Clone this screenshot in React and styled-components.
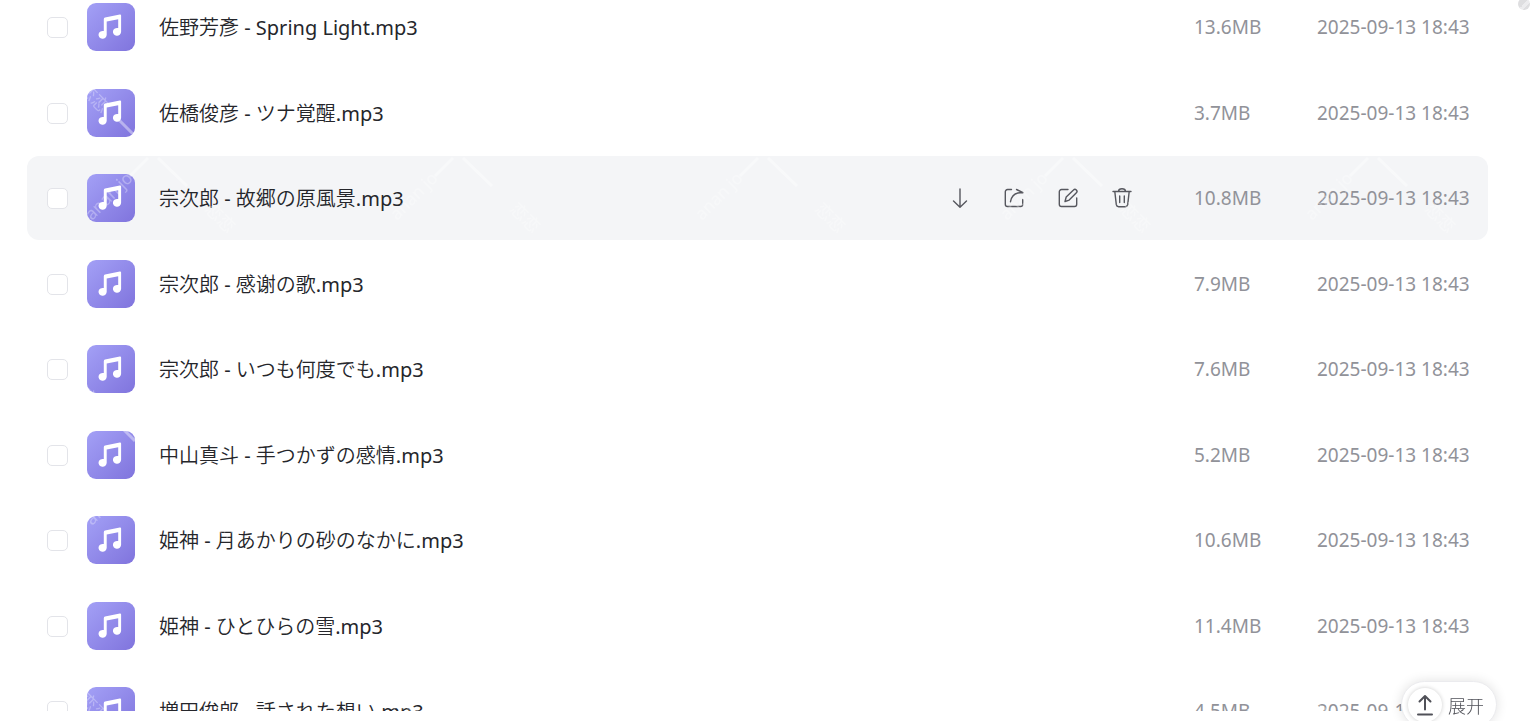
import React from 'react';
import styled, {createGlobalStyle} from 'styled-components';

const GlobalStyle = createGlobalStyle`
  * {
    box-sizing: border-box;
  }
  body {
    margin: 0;
    background: #fff;
    font-family: 'Noto Sans', 'Noto Sans CJK SC', sans-serif;
    overflow: hidden;
  }
`;
const Page = styled.main`
  position: relative;
  display: flex;
  flex-direction: column;
  height: 100vh;
  padding: 0 45px 10px 27px;
`;
const List = styled.ul`
  flex: 1;
  min-height: 0;
  margin: 0;
  padding: 0;
  list-style: none;
  overflow: hidden;
`;
const Row = styled.li`
  display: flex;
  align-items: center;
  height: 84px;
  margin-bottom: 1px;
  padding: 0 19px 0 20px;
  border-radius: 12px;
  background: ${(props) => (props.$active ? '#f4f5f7' : 'transparent')};
  &:nth-child(odd) {
    margin-bottom: 2px;
  }
  &:first-child {
    margin-top: -15px;
  }
`;
const Checkbox = styled.input`
  appearance: none;
  flex: none;
  width: 21px;
  height: 21px;
  margin: 0 19px 0 0;
  border: 1px solid #e3e4e9;
  border-radius: 5px;
  background: #fff;
  &:checked {
    background: #8b83e8;
  }
`;
const Name = styled.label`
  flex: 1;
  min-width: 0;
  margin-left: 24px;
  padding-top: 2px;
  overflow: hidden;
  color: #25262b;
  font-family: 'Noto Sans', 'Noto Sans CJK JP DemiLight', 'Noto Sans CJK JP Light',
    'Noto Sans CJK JP', sans-serif;
  font-size: 20px;
  line-height: 28px;
  white-space: nowrap;
  text-overflow: ellipsis;
`;
const Actions = styled.div`
  display: flex;
  gap: 30px;
  margin-right: 60px;
`;
const IconButton = styled.button`
  all: unset;
  display: flex;
  width: 24px;
  height: 24px;
  color: #56575e;
  cursor: pointer;
`;
const Meta = styled.span`
  flex: none;
  width: ${(props) => props.$width};
  color: #919299;
  font-size: 19px;
  line-height: 28px;
  white-space: nowrap;
`;
const ScrollThumb = styled.div`
  position: absolute;
  top: -2px;
  right: 3px;
  width: 12px;
  height: 12px;
  border-radius: 50%;
  background: linear-gradient(135deg, #dedee0 50%, #ececee 50%, #ececee 70%, #dedee0 70%);
`;
const Watermark = styled.svg`
  position: absolute;
  inset: 0;
  width: 100%;
  height: 100%;
  pointer-events: none;
`;
const Expand = styled.button`
  position: fixed;
  right: 36px;
  bottom: -7px;
  display: flex;
  align-items: center;
  gap: 6px;
  width: 96px;
  height: 47px;
  padding: 0 6px;
  border: 1px solid #ebebee;
  border-radius: 24px;
  background: #fff;
  box-shadow: 0 0 12px rgba(0, 0, 0, 0.12);
  color: #505158;
  font-family: inherit;
  font-size: 18px;
  font-weight: 300;
  white-space: nowrap;
  cursor: pointer;
`;
const Circle = styled.span`
  display: flex;
  align-items: center;
  justify-content: center;
  flex: none;
  width: 34px;
  height: 34px;
  border-radius: 50%;
  box-shadow: 0 0 4px rgba(0, 0, 0, 0.2);
`;

const MusicIcon = () => (
  <svg width="48" height="48" viewBox="0 0 48 48" aria-hidden="true">
    <defs>
      <linearGradient id="music" x1="0" y1="0" x2="1" y2="1">
        <stop offset="0" stopColor="#a3a0f6" />
        <stop offset="1" stopColor="#8074dd" />
      </linearGradient>
    </defs>
    <rect width="48" height="48" rx="9" fill="url(#music)" />
    <path
      fill="#fff"
      d="M16.800 16.200q0-1.300 1.200-1.600l14.800-3.100q1.300-.2 1.300 1v16.300a4.100 3.900 0 1 1-2.900-3.700V16.200l-11.500 2.400v13.200a4.100 3.900 0 1 1-2.900-3.700z"
    />
  </svg>
);

const line = {
  width: 24,
  height: 24,
  viewBox: '0 0 24 24',
  fill: 'none',
  stroke: 'currentColor',
  strokeWidth: 1.4,
  strokeLinecap: 'round',
  strokeLinejoin: 'round',
};
const DownloadIcon = () => (
  <svg {...line}>
    <path d="M12 3v18M5.500 15l6.500 6.200 6.500-6.200" />
  </svg>
);
const ShareIcon = () => (
  <svg {...line}>
    <path d="M9.500 3.500H5.500a2.200 2.200 0 0 0-2.200 2.200v12.600a2.200 2.200 0 0 0 2.200 2.200h13a2.200 2.200 0 0 0 2.200-2.200v-4.800M14.500 3.500l6.500 3.200H18c-4.800.3-8.500 3-9.500 9" />
  </svg>
);
const EditIcon = () => (
  <svg {...line}>
    <path d="M12 3.500H5.500a2.200 2.200 0 0 0-2.200 2.200v12.600a2.200 2.200 0 0 0 2.200 2.200h13a2.200 2.200 0 0 0 2.200-2.200V12M9 15.500l1.200-4.500 7.300-7a2 2 0 0 1 2.900 2.800l-7.200 7.300z" />
  </svg>
);
const TrashIcon = () => (
  <svg {...line}>
    <path d="M3 5.500h18M8.500 5.200c.2-3.200 6.800-3.200 7 0M4.800 5.500l1.500 13.200a2.400 2.400 0 0 0 2.400 2h6.600a2.400 2.400 0 0 0 2.400-2l1.500-13.200M9.700 10v6.500M14.300 10v6.500" />
  </svg>
);

const actions = [
  {label: '下载', Icon: DownloadIcon},
  {label: '分享', Icon: ShareIcon},
  {label: '重命名', Icon: EditIcon},
  {label: '删除', Icon: TrashIcon},
];

const files = [
  {name: '佐野芳彥 - Spring Light.mp3', size: '13.6MB'},
  {name: '佐橋俊彦 - ツナ覚醒.mp3', size: '3.7MB'},
  {name: '宗次郎 - 故郷の原風景.mp3', size: '10.8MB', active: true},
  {name: '宗次郎 - 感谢の歌.mp3', size: '7.9MB'},
  {name: '宗次郎 - いつも何度でも.mp3', size: '7.6MB'},
  {name: '中山真斗 - 手つかずの感情.mp3', size: '5.2MB'},
  {name: '姫神 - 月あかりの砂のなかに.mp3', size: '10.6MB'},
  {name: '姫神 - ひとひらの雪.mp3', size: '11.4MB'},
  {name: '増田俊郎 - 話された想い.mp3', size: '4.5MB'},
];

const FileRow = ({file, id}) => (
  <Row $active={file.active}>
    <Checkbox type="checkbox" id={id} />
    <MusicIcon />
    <Name htmlFor={id} lang="ja">
      {file.name}
    </Name>
    {file.active && (
      <Actions>
        {actions.map(({label, Icon}) => (
          <IconButton key={label} aria-label={label}>
            <Icon />
          </IconButton>
        ))}
      </Actions>
    )}
    <Meta $width="123px">{file.size}</Meta>
    <Meta $width="152px">2025-09-13 18:43</Meta>
  </Row>
);

const App = () => (
  <Page>
    <GlobalStyle />
    <List>
      {files.map((file, index) => (
        <FileRow key={file.name} file={file} id={`file-${index}`} />
      ))}
    </List>
    <ScrollThumb />
    <Watermark aria-hidden="true">
      <defs>
        <pattern id="mark" width="305" height="305" patternUnits="userSpaceOnUse">
          <path
            d="M118 119l17 17M158 158l29 28M148 158l-18 18"
            stroke="#fff"
            strokeWidth="3"
            opacity="0.4"
          />
          <g fill="#fff" fontSize="17" opacity="0.3">
            <text transform="translate(78 90) rotate(45)">恋恋</text>
            <text transform="translate(204 210) rotate(45)">恋恋</text>
            <text transform="translate(92 221) rotate(-45)">anan jo</text>
          </g>
        </pattern>
      </defs>
      <rect width="100%" height="100%" fill="url(#mark)" />
    </Watermark>
    <Expand>
      <Circle>
        <svg
          width="22"
          height="22"
          viewBox="0 0 22 22"
          fill="none"
          stroke="currentColor"
          strokeWidth="2"
          strokeLinecap="round"
          strokeLinejoin="round"
        >
          <path d="M11 15.500V2.500M5.500 7.500L11 2l5.500 5.500M4 20.500h14" />
        </svg>
      </Circle>
      展开
    </Expand>
  </Page>
);

export default App;
